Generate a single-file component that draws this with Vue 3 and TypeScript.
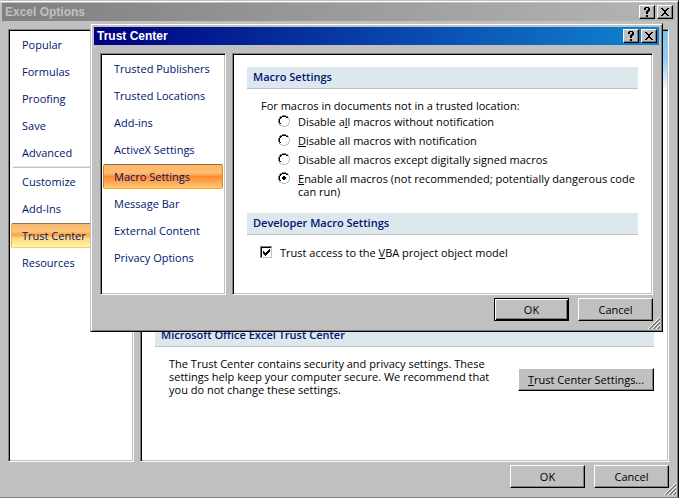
<script setup lang="ts">
import { ref } from 'vue'

interface NavItem { label: string; separated?: boolean }
interface MacroOption { id: string; before: string; key: string; after: string }

const optionPages: NavItem[] = [
  { label: 'Popular' }, { label: 'Formulas' }, { label: 'Proofing' }, { label: 'Save' }, { label: 'Advanced' },
  { label: 'Customize', separated: true }, { label: 'Add-Ins' }, { label: 'Trust Center' }, { label: 'Resources' },
]
const trustPages: NavItem[] = [
  { label: 'Trusted Publishers' }, { label: 'Trusted Locations' }, { label: 'Add-ins' }, { label: 'ActiveX Settings' },
  { label: 'Macro Settings' }, { label: 'Message Bar' }, { label: 'External Content' }, { label: 'Privacy Options' },
]
const macroOptions: MacroOption[] = [
  { id: 'silent', before: 'Disable a', key: 'l', after: 'l macros without notification' },
  { id: 'notify', before: '', key: 'D', after: 'isable all macros with notification' },
  { id: 'signed', before: 'Disable all macros except di', key: 'g', after: 'itally signed macros' },
  { id: 'enable', before: '', key: 'E', after: 'nable all macros (not recommended; potentially dangerous code can run)' },
]
const optionPage = ref('Trust Center')
const trustPage = ref('Macro Settings')
const macro = ref('enable')
const trustVba = ref(true)
</script>

<template>
  <main class="window options">
    <header class="titlebar inactive">
      <h1>Excel Options</h1>
      <div class="caption">
        <button type="button" aria-label="Help"><svg viewBox="0 0 12 10" width="12" height="10" shape-rendering="crispEdges"><path d="M4 0h4v1h1v3h-1v1h-1v2h-2v-3h1v-1h1v-2h-2v2h-2v-2h1zM5 8h2v2h-2z" /></svg></button>
        <button type="button" aria-label="Close"><svg viewBox="0 0 12 10" width="12" height="10" shape-rendering="crispEdges"><path d="M2 1h2v1h1v1h2v-1h1v-1h2v1h-1v1h-1v1h-1v2h1v1h1v1h1v1h-2v-1h-1v-1h-2v1h-1v1h-2v-1h1v-1h1v-1h1v-2h-1v-1h-1v-1h-1z" /></svg></button>
      </div>
    </header>
    <div class="body">
      <nav class="panel nav" aria-label="Excel Options">
        <template v-for="page in optionPages" :key="page.label">
          <hr v-if="page.separated">
          <button type="button" class="item gold" :class="{ selected: optionPage === page.label }" @click="optionPage = page.label">{{ page.label }}</button>
        </template>
      </nav>
      <section class="panel content lower">
        <h2>Microsoft Office Excel Trust Center</h2>
        <div class="summary">
          <p>The Trust Center contains security and privacy settings. These settings help keep your computer secure. We recommend that you do not change these settings.</p>
          <button type="button" class="push wide"><u>T</u>rust Center Settings...</button>
        </div>
      </section>
    </div>
    <footer class="actions">
      <button type="button" class="push">OK</button>
      <button type="button" class="push">Cancel</button>
    </footer>
    <svg class="grip" viewBox="0 0 12 12" width="12" height="12"><path d="M0 12L12 0M4 12L12 4M8 12L12 8" stroke="#fff" /><path d="M1 12L12 1M2 12L12 2M5 12L12 5M6 12L12 6M9 12L12 9M10 12L12 10" stroke="#808080" /></svg>
  </main>

  <div class="window dialog" role="dialog" aria-labelledby="trust-title">
    <header class="titlebar active">
      <h1 id="trust-title">Trust Center</h1>
      <div class="caption">
        <button type="button" aria-label="Help"><svg viewBox="0 0 12 10" width="12" height="10" shape-rendering="crispEdges"><path d="M4 0h4v1h1v3h-1v1h-1v2h-2v-3h1v-1h1v-2h-2v2h-2v-2h1zM5 8h2v2h-2z" /></svg></button>
        <button type="button" aria-label="Close"><svg viewBox="0 0 12 10" width="12" height="10" shape-rendering="crispEdges"><path d="M2 1h2v1h1v1h2v-1h1v-1h2v1h-1v1h-1v1h-1v2h1v1h1v1h1v1h-2v-1h-1v-1h-2v1h-1v1h-2v-1h1v-1h1v-1h1v-2h-1v-1h-1v-1h-1z" /></svg></button>
      </div>
    </header>
    <div class="body">
      <nav class="panel nav" aria-label="Trust Center">
        <button v-for="page in trustPages" :key="page.label" type="button" class="item" :class="{ selected: trustPage === page.label }" @click="trustPage = page.label">{{ page.label }}</button>
      </nav>
      <section class="panel content trust">
        <h2>Macro Settings</h2>
        <fieldset>
          <legend>For macros in documents not in a trusted location:</legend>
          <label v-for="option in macroOptions" :key="option.id" class="choice">
            <span class="mark">
              <input v-model="macro" type="radio" name="macro" :value="option.id">
              <svg viewBox="0 0 12 12" width="12" height="12" shape-rendering="crispEdges">
                <path fill="#808080" d="M4 0h4v1h-4zM2 1h2v1h-2zM8 1h2v1h-2zM1 2h1v2h-1zM0 4h1v4h-1zM1 8h1v2h-1z" />
                <path d="M4 1h4v1h-4zM2 2h2v1h-2zM8 2h2v1h-2zM2 3h1v1h-1zM1 4h1v4h-1zM2 8h1v1h-1z" />
                <path fill="#c0c0c0" d="M10 2h1v2h-1zM11 4h1v4h-1zM10 8h1v2h-1zM8 10h2v1h-2zM4 11h4v1h-4zM2 10h2v1h-2z" />
                <path v-if="macro === option.id" d="M5 4h2v1h1v2h-1v1h-2v-1h-1v-2h1z" />
              </svg>
            </span>
            <span>{{ option.before }}<u>{{ option.key }}</u>{{ option.after }}</span>
          </label>
        </fieldset>
        <h2>Developer Macro Settings</h2>
        <label class="choice vba">
          <span class="mark">
            <input v-model="trustVba" type="checkbox">
            <svg viewBox="0 0 12 12" width="12" height="12" shape-rendering="crispEdges">
              <path fill="#c0c0c0" d="M0 0h12v12h-12z" />
              <path fill="#808080" d="M0 0h12v1h-11v11h-1z" />
              <path d="M1 1h10v1h-9v9h-1z" />
              <path fill="#fff" d="M2 2h9v9h-9z" />
              <path v-if="trustVba" d="M3 5h1v1h1v1h1v-1h1v-1h1v-1h1v-1h1v3h-1v1h-1v1h-1v1h-1v1h-1v-1h-1v-1h-1z" />
            </svg>
          </span>
          <span>Trust access to the <u>V</u>BA project object model</span>
        </label>
      </section>
    </div>
    <footer class="actions">
      <button type="button" class="push default">OK</button>
      <button type="button" class="push">Cancel</button>
    </footer>
    <svg class="grip" viewBox="0 0 12 12" width="12" height="12"><path d="M0 12L12 0M4 12L12 4M8 12L12 8" stroke="#fff" /><path d="M1 12L12 1M2 12L12 2M5 12L12 5M6 12L12 6M9 12L12 9M10 12L12 10" stroke="#808080" /></svg>
  </div>
</template>

<style>
body { margin: 0; background: #c0c0c0; }
</style>

<style scoped>
.window, .window * { box-sizing: border-box; }
.window {
  position: relative;
  display: flex;
  flex-direction: column;
  background: #c0c0c0;
  color: #000;
  font: 11px/13px "Open Sans", "Noto Sans", sans-serif;
}
.options {
  min-height: 100vh;
  padding: 1px 0 9px;
  border-top: 1px solid #c0c0c0;
  border-right: 1px solid #000;
  border-bottom: 1px solid #808080;
  box-shadow: inset 0 1px #fff, inset -1px 0 #808080;
}
.dialog {
  position: absolute;
  top: 23px;
  left: 90px;
  right: 16px;
  padding: 2px 2px 10px;
  border: 1px solid;
  border-color: #c0c0c0 #000 #000 #c0c0c0;
  box-shadow: inset 1px 1px #fff, inset -1px -1px #808080;
}
.titlebar {
  display: flex;
  align-items: center;
  justify-content: space-between;
  height: 18px;
  margin: 1px;
  padding: 0 2px 0 3px;
}
.options .titlebar { margin: 1px 3px 1px 2px; }
.inactive { color: #c0c0c0; background: linear-gradient(90deg, #808080, #b5b5b5); }
.active { color: #fff; background: linear-gradient(90deg, #000080, #1084d0); }
h1 { margin: 0; font: bold 12px/18px "Liberation Sans", Arial, sans-serif; }
.caption { display: flex; gap: 2px; }
button { margin: 0; color: inherit; font: inherit; }
.caption button {
  display: grid;
  place-items: center;
  width: 16px;
  height: 14px;
  padding: 0;
  color: #000;
  background: #c0c0c0;
  border: 1px solid;
  border-color: #fff #000 #000 #fff;
  box-shadow: inset -1px -1px #808080;
}
.body {
  flex: 1;
  display: grid;
  grid-template-columns: 126px 1fr;
  gap: 6px;
  padding: 7px 7px 3px;
}
.options .body { padding: 7px 9px 3px 8px; }
.panel {
  background: #fff;
  border: 1px solid;
  border-color: #808080 #fff #fff #808080;
  box-shadow: inset 1px 1px #000, inset -1px -1px #c0c0c0;
}
.nav { display: flex; flex-direction: column; padding: 1px 2px; }
.item {
  height: 25px;
  margin: 1px 0;
  padding: 0 10px;
  text-align: left;
  white-space: nowrap;
  color: #00156e;
  background: none;
  border: 1px solid transparent;
  border-radius: 2px;
}
.selected {
  background: linear-gradient(#fdb56b, #ffbd70 35%, #fe8a34 50%, #ff9d42 65%, #ffc878);
  border-color: #8e6a3c #d98d34 #ffa817 #c58b45;
}
.gold.selected {
  background: linear-gradient(#f8b673, #ffc777 30%, #fca044 48%, #ffdb80 62%, #fff3a8);
  border-color: #8e7350 #d9a045 #fbd14c #e8b04a;
}
hr { width: 100%; height: 2px; margin: 0 0 0 2px; border: 0; border-top: 1px solid #dde7ee; background: #b8c4ce; }
.content { padding: 13px 14px; }
.trust { padding-bottom: 35px; }
h2 {
  margin: 0;
  height: 22px;
  padding: 0 6px;
  font-size: 11px;
  font-weight: 600;
  line-height: 20px;
  color: #00156e;
  background: #dde7ee;
  border-bottom: 1px solid #c0c0c0;
}
.lower {
  position: relative;
  display: flex;
  flex-direction: column;
  justify-content: flex-end;
  padding-bottom: 65px;
}
.lower::before {
  content: "";
  position: absolute;
  top: 1px;
  right: 1px;
  width: 40%;
  height: 60px;
  background: linear-gradient(#6fc4fb, #8fd0fc 50%, #fff);
}
.summary { display: flex; align-items: center; justify-content: space-between; padding: 10px 0 0 14px; }
p { margin: 0; max-width: 330px; }
fieldset { margin: 0; padding: 10px 0 12px 14px; border: 0; }
legend { float: left; width: 100%; padding: 0; }
.choice { display: flex; gap: 8px; clear: both; padding: 3px 0 3px 17px; }
.vba { padding: 11px 0 0 13px; }
.mark { display: grid; flex: none; width: 12px; height: 12px; }
.mark > * { grid-area: 1 / 1; width: 12px; height: 12px; margin: 0; }
.mark input { opacity: 0; }
.actions { display: flex; justify-content: flex-end; gap: 9px; padding: 0 7px; }
.options .actions { padding: 0 9px; }
.push {
  min-width: 75px;
  height: 23px;
  padding: 0 8px;
  background: #c0c0c0;
  border: 1px solid;
  border-color: #fff #000 #000 #fff;
  box-shadow: inset -1px -1px #808080;
}
.default { border-color: #000; box-shadow: inset 1px 1px #fff, inset -1px -1px #000, inset -2px -2px #808080; }
.wide { flex: none; width: 136px; padding: 0; margin-top: 6px; }
.grip { position: absolute; right: 2px; bottom: 2px; }
</style>
